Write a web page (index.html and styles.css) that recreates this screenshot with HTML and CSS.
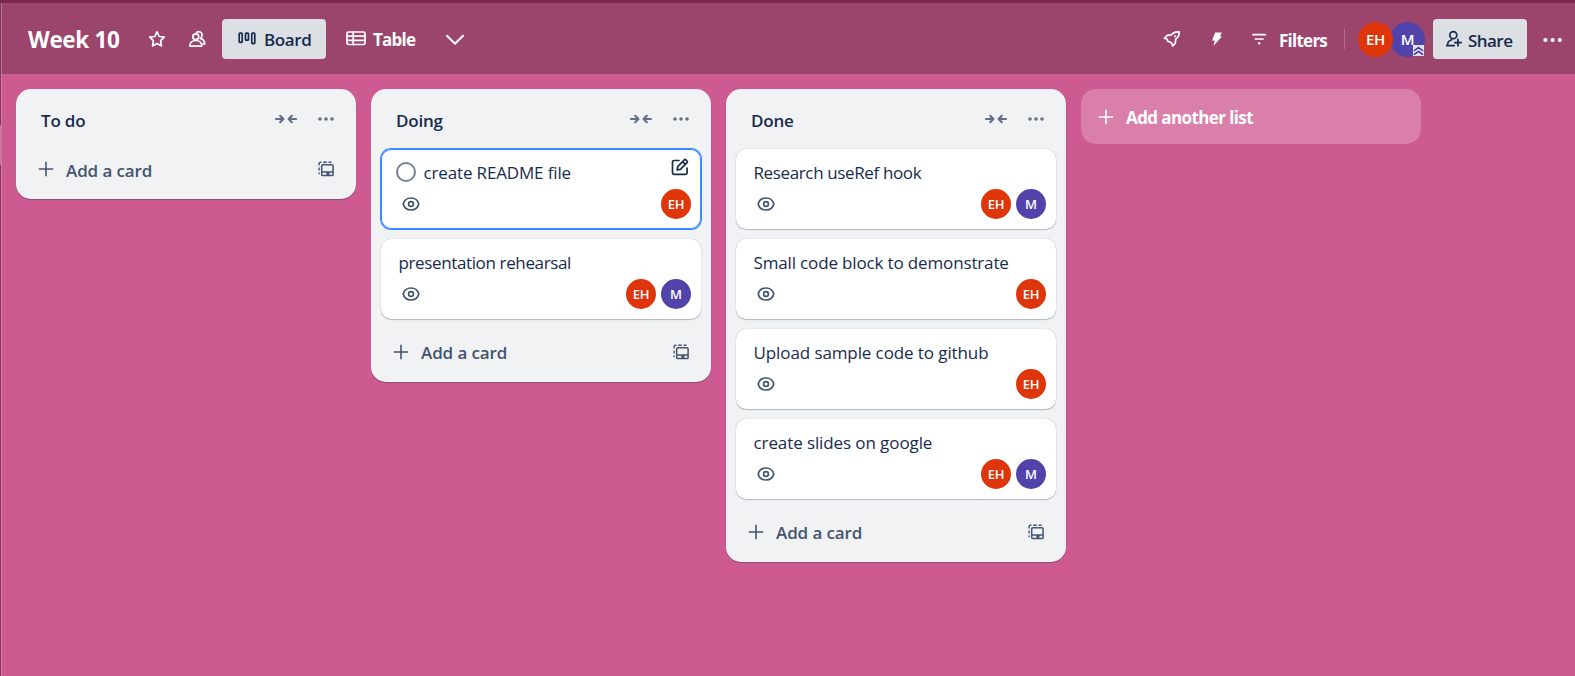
FILE: index.html
```
<!DOCTYPE html>
<html lang="en">
<head>
<meta charset="utf-8">
<title>Week 10</title>
<link rel="stylesheet" href="styles.css">
</head>
<body>
<svg class="defs" width="0" height="0" aria-hidden="true">
  <symbol id="collapse" viewBox="0 0 24 16"><path d="M2 8h7M6.200 4.800 9.400 8l-3.200 3.200M22 8h-7M17.800 4.800 14.600 8l3.200 3.200" fill="none" stroke="currentColor" stroke-width="2.200" stroke-linecap="round" stroke-linejoin="round"/></symbol>
  <symbol id="dots" viewBox="0 0 24 16"><g fill="currentColor"><circle cx="6" cy="8" r="1.800"/><circle cx="12" cy="8" r="1.800"/><circle cx="18" cy="8" r="1.800"/></g></symbol>
  <symbol id="plus" viewBox="0 0 16 16"><path d="M8 .8v14.400M.8 8h14.400" fill="none" stroke="currentColor" stroke-width="1.600"/></symbol>
  <symbol id="template" viewBox="0 0 16 16"><g fill="none" stroke="currentColor" stroke-width="1.500"><rect x="3.700" y="3.800" width="11.400" height="10.800" rx="1.200"/><path d="M4 11h11"/><path d="M1.100 13.200v-1.800M1.100 9.600V6.400M1.100 4.400V2.600Q1.100 1.300 2.400 1.300h1M5.200 1.300h3.600M10.600 1.300h3" stroke-width="1.400"/></g><path d="M8.400 11h3v3.400h-3z" fill="currentColor"/></symbol>
  <symbol id="eye" viewBox="0 0 18 14"><g fill="none" stroke="currentColor" stroke-width="1.700"><path d="M1.200 7C2.200 3.200 5.200 1 9 1s6.800 2.200 7.800 6c-1 3.800-4 6-7.800 6S2.200 10.800 1.200 7z"/><circle cx="9" cy="7" r="2.400"/></g></symbol>
</svg>

<header class="header">
  <h1 class="board-name">Week 10</h1>
  <svg class="icon star" viewBox="0 0 24 24"><path d="M12 4.800 14.200 9.500 19.300 10.200 15.600 13.700 16.500 18.900 12 16.400 7.500 18.900 8.400 13.700 4.700 10.200 9.800 9.500z"/></svg>
  <svg class="icon members" viewBox="0 0 24 24"><circle cx="10.800" cy="9.700" r="2.900"/><path d="M4.800 19.200c0-3.600 2.600-5.700 6-5.700s6 2.100 6 5.700zM11.600 5.400c2.400-1.800 5.600-.2 5.500 2.500 0 1.500-.6 2.700-1.700 3.500 2.800.7 4.200 2.800 4.300 5.600h-2"/></svg>
  <div class="view view-active">
    <svg class="board-icon" viewBox="0 0 20 16"><rect x="2.200" y="2.200" width="3" height="9.200" rx=".8"/><rect x="8.500" y="2.200" width="3" height="7" rx=".8"/><rect x="14.800" y="2.200" width="3" height="10.400" rx=".8"/></svg>
    <span>Board</span>
  </div>
  <div class="view view-table">
    <svg class="table-icon" viewBox="0 0 20 16"><rect x="1" y="1" width="18" height="12.500" rx="1.500"/><path d="M1 5.100h18M1 9.300h18M7.200 1V13.500"/></svg>
    <span>Table</span>
  </div>
  <svg class="chevron" viewBox="0 0 20 12"><path d="m2 1.800 8 7.900 8-7.900"/></svg>

  <div class="tools">
    <svg class="icon rocket" viewBox="0 0 24 24"><path d="M19.200 4.900c-3.200-.5-5.800.6-7.900 2.900l-4 .6-2.900 2.900 2.800 1 .5 2 2.800.9 1.400 1.200.8 2.600 2.600-2.600.4-4.300c2.600-1.900 3.800-4.200 3.500-7.200z"/><circle class="dot" cx="15" cy="9.200" r="1"/></svg>
    <svg class="bolt" viewBox="0 0 12 16"><path d="M4.200 1.400h6.600L9 5.600h2L2.400 15l1.400-5.400H1z"/></svg>
    <svg class="filter" viewBox="0 0 16 12"><path d="M2 1.700h12.400M4.400 6h7.600"/><circle class="dot" cx="8.200" cy="10.200" r="1.200"/></svg>
    <span class="filters-label">Filters</span>
    <span class="divider"></span>
    <div class="members-stack">
      <span class="avatar avatar-lg red">EH</span>
      <span class="avatar avatar-lg purple">M
        <svg class="badge" viewBox="0 0 12 12"><path d="m1.500 6 4.500-3.200L10.500 6M1.500 10.200 6 7l4.500 3.200"/></svg>
      </span>
    </div>
    <div class="share">
      <svg class="share-icon" viewBox="0 0 18 18"><circle cx="8.300" cy="5.200" r="3.500"/><path d="M2.400 15.700c0-3 1.500-5 4.300-5.900M1.700 15.700h7.400M13 9.400v6.400M9.800 12.600h6.400"/></svg>
      <span>Share</span>
    </div>
    <svg class="more" viewBox="0 0 20 8"><circle cx="2.400" cy="4" r="2.100"/><circle cx="9.600" cy="4" r="2.100"/><circle cx="16.800" cy="4" r="2.100"/></svg>
  </div>
</header>

<main class="board">
  <section class="list list-empty">
    <div class="list-head"><h2>To do</h2><svg class="i24"><use href="#collapse"/></svg><svg class="i24"><use href="#dots"/></svg></div>
    <div class="add-card"><svg class="i16"><use href="#plus"/></svg><span>Add a card</span><svg class="i16"><use href="#template"/></svg></div>
  </section>

  <section class="list">
    <div class="list-head"><h2>Doing</h2><svg class="i24"><use href="#collapse"/></svg><svg class="i24"><use href="#dots"/></svg></div>
    <div class="cards">
      <article class="card card-focus">
        <div class="card-title"><span class="check"></span><span class="name">create README file</span>
          <svg class="edit" viewBox="0 0 18 18"><path d="M8 2.500H3.200q-1.700 0-1.700 1.700v10.400q0 1.700 1.700 1.700h11.200q1.700 0 1.700-1.700V10M6.700 8.600l6.600-6.700q.8-.8 1.600 0l1.100 1.100q.8.8 0 1.600l-6.600 6.700-3.300.6zM11.600 3.700l2.700 2.700"/></svg>
        </div>
        <div class="card-foot"><svg class="eye"><use href="#eye"/></svg><span class="avatar red">EH</span></div>
      </article>
      <article class="card">
        <div class="card-title tight"><span class="name">presentation rehearsal</span></div>
        <div class="card-foot"><svg class="eye"><use href="#eye"/></svg><span class="avatar red">EH</span><span class="avatar purple">M</span></div>
      </article>
    </div>
    <div class="add-card"><svg class="i16"><use href="#plus"/></svg><span>Add a card</span><svg class="i16"><use href="#template"/></svg></div>
  </section>

  <section class="list">
    <div class="list-head"><h2>Done</h2><svg class="i24"><use href="#collapse"/></svg><svg class="i24"><use href="#dots"/></svg></div>
    <div class="cards">
      <article class="card">
        <div class="card-title tight"><span class="name">Research useRef hook</span></div>
        <div class="card-foot"><svg class="eye"><use href="#eye"/></svg><span class="avatar red">EH</span><span class="avatar purple">M</span></div>
      </article>
      <article class="card">
        <div class="card-title"><span class="name">Small code block to demonstrate</span></div>
        <div class="card-foot"><svg class="eye"><use href="#eye"/></svg><span class="avatar red">EH</span></div>
      </article>
      <article class="card">
        <div class="card-title loose"><span class="name">Upload sample code to github</span></div>
        <div class="card-foot"><svg class="eye"><use href="#eye"/></svg><span class="avatar red">EH</span></div>
      </article>
      <article class="card">
        <div class="card-title loose"><span class="name">create slides on google</span></div>
        <div class="card-foot"><svg class="eye"><use href="#eye"/></svg><span class="avatar red">EH</span><span class="avatar purple">M</span></div>
      </article>
    </div>
    <div class="add-card"><svg class="i16"><use href="#plus"/></svg><span>Add a card</span><svg class="i16"><use href="#template"/></svg></div>
  </section>

  <div class="add-list"><svg class="i16"><use href="#plus"/></svg><span>Add another list</span></div>
</main>
</body>
</html>
```
FILE: styles.css
```
* { box-sizing: border-box; }

body {
  margin: 0;
  height: 676px;
  overflow: hidden;
  background: #cd5a91;
  border-top: 3px solid #7b2850;
  font-family: "Open Sans", "Noto Sans", sans-serif;
  font-size: 17px;
  color: #172b4d;
  white-space: nowrap;
}

body::before {
  content: "";
  position: absolute;
  left: 0;
  top: 3px;
  width: 2px;
  height: 673px;
  background: linear-gradient(#b87396 0 71px, #d777a5 71px) 1px 0 / 1px 100% no-repeat,
    linear-gradient(#8a3560 0 122px, #c07a9c 122px 162px, #8a3560 162px) 0 0 / 1px 100% no-repeat;
}

.defs { position: absolute; }
svg { flex: none; display: block; }
h1, h2 { margin: 0; }

.header {
  display: flex;
  align-items: center;
  height: 71px;
  padding: 1px 0 0 28px;
  background: #9b446c;
  color: #fff;
}

.header svg { fill: none; stroke: currentColor; stroke-width: 1.7; stroke-linejoin: round; stroke-linecap: round; }
.header .dot { fill: currentColor; stroke: none; }

.board-name { width: 92px; margin-right: 25px; padding-top: 2px; font-size: 22.5px; letter-spacing: -.35px; font-weight: 700; line-height: 30px; }
.icon { width: 24px; height: 24px; }
.members { margin-left: 16px; }

.view { display: flex; align-items: center; height: 40px; border-radius: 4px; font-weight: 600; }
.view span, .filters-label, .share span { padding-top: 1px; }
.filters-label { padding-top: 2px; }
.view-active { width: 104px; margin-left: 13px; padding-left: 15px; background: #dcdfe4; color: #172b4d; letter-spacing: -.4px; }
.board-icon { width: 20px; height: 16px; margin-right: 7px; }
.view-table { width: 90px; margin-left: 20px; font-weight: 700; letter-spacing: -.75px; }
.table-icon { width: 20px; height: 16px; margin-right: 7px; }
.chevron { width: 20px; height: 12px; margin: 2px 0 0 9px; }
.header .chevron { stroke-width: 2.1; }

.tools { display: flex; align-items: center; margin-left: auto; padding-right: 12px; }
.bolt { width: 12px; height: 16px; margin-left: 27px; }
.header .bolt { fill: #fff; stroke: none; }
.filter { width: 16px; height: 12px; margin-left: 28px; }
.filters-label { width: 49px; margin-left: 12px; font-weight: 700; letter-spacing: -.75px; }
.divider { width: 1px; height: 20px; margin: 0 13px 0 16px; background: #b4708f; }
.members-stack { display: flex; margin-top: 1px; }

.avatar {
  display: flex;
  align-items: center;
  justify-content: center;
  width: 30px;
  height: 30px;
  border-radius: 50%;
  color: #fff;
  font-size: 13px;
  font-weight: 600;
  letter-spacing: -.2px;
}
.avatar-lg { position: relative; width: 35px; height: 35px; font-size: 15px; }
.avatar-lg + .avatar-lg { margin-left: -3px; }
.members-stack .avatar { padding-bottom: 1px; }
.members-stack .red { z-index: 1; }
.red { background: #de350b; }
.purple { background: #5243aa; }
.badge { position: absolute; right: 1px; bottom: 1px; width: 11px; height: 11px; background: #dfe0f0; color: #403294; }
.header .badge { stroke-width: 1.6; }

.share {
  display: flex;
  align-items: center;
  width: 94px;
  height: 40px;
  margin-left: 8px;
  padding-left: 12px;
  border-radius: 4px;
  background: #dcdfe4;
  color: #172b4d;
  font-weight: 600;
  letter-spacing: -.55px;
}
.share-icon { width: 18px; height: 18px; margin-right: 5px; }
.share span { padding-top: 2px; }
.more { width: 20px; height: 8px; margin: 1px 0 0 16px; }
.header .more { fill: #fff; stroke: none; }

.board { display: flex; align-items: flex-start; gap: 15px; padding: 15px 16px; }

.list {
  width: 340px;
  padding: 0 10px 10px;
  border-radius: 15px;
  background: #f1f2f4;
  box-shadow: 0 1px 1px rgba(9, 30, 66, .3);
}

.list-head { display: flex; align-items: center; gap: 16px; height: 60px; padding: 0 8px 0 15px; color: #626f86; }
.list-head h2 { flex: 1; font-size: 17px; font-weight: 600; line-height: 24px; letter-spacing: -.2px; padding-top: 3px; color: #172b4d; }
.i24 { width: 24px; height: 16px; }
.i16 { width: 16px; height: 16px; }

.cards { display: flex; flex-direction: column; gap: 10px; margin-bottom: 13px; }

.card {
  height: 80px;
  padding: 10px 10px 0 17.5px;
  border-radius: 10px;
  background: #fff;
  box-shadow: 0 1px 1px rgba(9, 30, 66, .25), 0 0 1px rgba(9, 30, 66, .31);
}
.card-focus { box-shadow: 0 0 0 1px #388bff, inset 0 0 0 1px #388bff; }
.card-title { display: flex; align-items: center; height: 25px; letter-spacing: -.15px; }
.card-title.tight { letter-spacing: -.37px; }
.card-title.loose { letter-spacing: -.1px; }
.name { padding-top: 1px; }
.card-focus .card-title { margin-left: -2.5px; }
.check { width: 20px; height: 20px; margin-right: 7.5px; border: 2px solid #758195; border-radius: 50%; }
.edit { width: 18px; height: 18px; margin: -9px 2px 0 auto; fill: none; stroke: #172b4d; stroke-width: 1.7; stroke-linejoin: round; stroke-linecap: round; }
.card-foot { display: flex; align-items: center; gap: 5px; height: 30px; margin-top: 5px; color: #44546f; }
.eye { width: 18px; height: 14px; margin: 0 auto 0 3.5px; }

.add-card { display: flex; align-items: center; height: 40px; padding: 0 12px; color: #44546f; font-weight: 600; letter-spacing: -.1px; }
.add-card span { flex: 1; margin-left: 12px; }
.list-empty .add-card span { padding-top: 2px; }

.add-list {
  display: flex;
  align-items: center;
  gap: 12px;
  width: 340px;
  height: 55px;
  padding: 1px 0 0 17px;
  border-radius: 15px;
  background: #d97faa;
  color: #fff;
  font-weight: 700;
  letter-spacing: -.6px;
}
```
